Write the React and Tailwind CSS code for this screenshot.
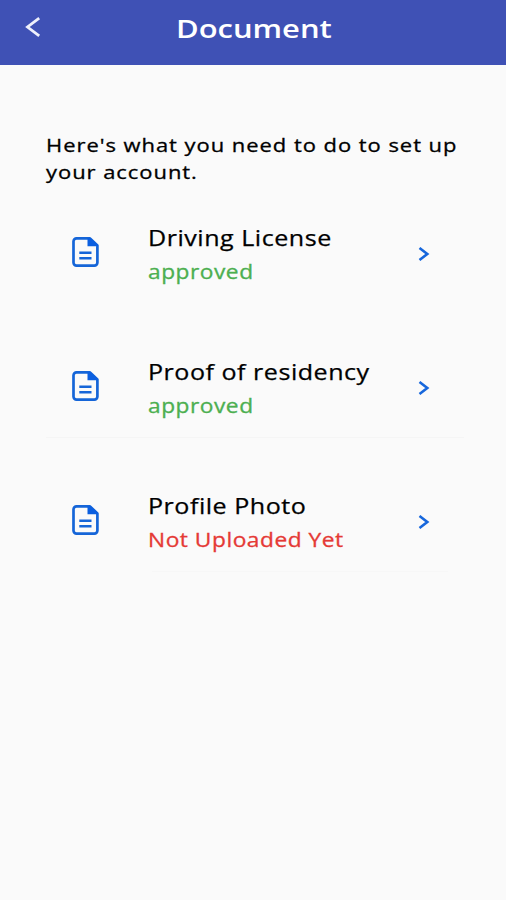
import React from 'react';

const documents = [
  { name: 'Driving License', status: 'approved', color: 'text-[#4caf50]', divider: 'border-transparent' },
  { name: 'Proof of residency', status: 'approved', color: 'text-[#4caf50]', divider: 'border-[#f5f5f5]' },
  { name: 'Profile Photo', status: 'Not Uploaded Yet', color: 'text-[#e53935]', divider: 'ml-[106px] mr-[16px] border-[#f7f7f7]' },
];

const DocumentIcon = () => (
  <svg className="h-[30px] w-[27px]" viewBox="0 0 27 30" fill="none">
    <path d="M4.5 1.4H18L25.4 8.5V25.6a3 3 0 0 1-3 3H4.5a3 3 0 0 1-3-3V4.4a3 3 0 0 1 3-3Z" stroke="#1565d8" strokeWidth="2.7" strokeLinejoin="round" />
    <path d="M15.5 1V9.3H26V8L18.5 1Z" fill="#0b5fe0" />
    <path d="M7.3 15.7H19.5M7.3 21.2H19.5" stroke="#1565d8" strokeWidth="2.4" />
  </svg>
);

const App = () => {
  return (
    <div className="h-[900px] w-[506px] overflow-hidden bg-[#fafafa] font-['Open_Sans',sans-serif] text-black">
      <header className="flex h-[65px] items-center bg-[#3f51b5] pl-[25px] text-white">
        <svg className="mb-[11px] h-[20px] w-[16px]" viewBox="0 0 16 20" fill="none">
          <path d="M14.2 1.2L2.5 10L14.2 18.8" stroke="#eef0fb" strokeWidth="2.8" />
        </svg>
        <h1 className="mb-[10px] ml-[135px] origin-left scale-x-[1.19] text-[26px] leading-8 font-semibold">Document</h1>
      </header>
      <main className="pt-[67px] pl-[46px]">
        <p className="w-[350px] origin-left scale-x-[1.155] text-[19px] leading-[27px] font-medium tracking-[0.84px] whitespace-nowrap [-webkit-text-stroke:0.3px_black]">
          Here's what you need to do to set up
          <br />
          your account.
        </p>
        <div className="pt-[37px]">
          {documents.map((doc) => (
            <div key={doc.name} className="h-[134px] w-[418px]">
              <div className="flex h-[80px] items-start pl-[26px]">
                <div className="w-[76px] pt-[14px]">
                  <DocumentIcon />
                </div>
                <div className="w-[270px] pt-px">
                  <h2 className="origin-left scale-x-[1.165] text-[21.5px] leading-[28px] font-medium tracking-[0.45px] whitespace-nowrap [-webkit-text-stroke:0.25px_black]">{doc.name}</h2>
                  <p className={`mt-[6px] origin-left scale-x-[1.165] text-[19.5px] leading-[27px] font-medium tracking-[0.45px] whitespace-nowrap [-webkit-text-stroke:0.3px_currentColor] ${doc.color}`}>{doc.status}</p>
                </div>
                <svg className="mt-[24px] h-[14px] w-[12px]" viewBox="0 0 12 14" fill="none">
                  <path d="M1.5 1L9.3 7L1.5 13" stroke="#1767dc" strokeWidth="2.6" />
                </svg>
              </div>
              <div className={`border-b ${doc.divider}`} />
            </div>
          ))}
        </div>
      </main>
    </div>
  );
};

export default App;
